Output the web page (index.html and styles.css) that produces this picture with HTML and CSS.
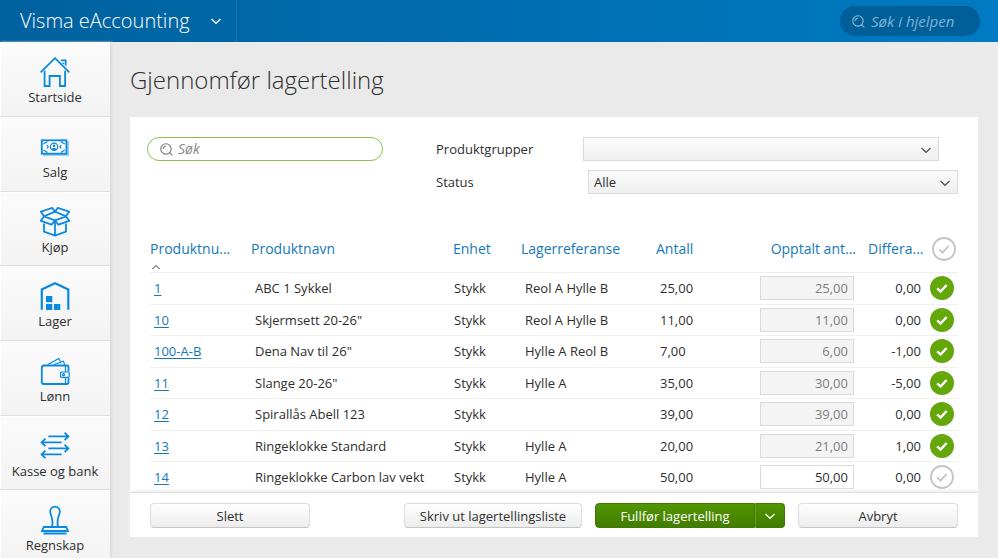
FILE: index.html
```html
<!DOCTYPE html>
<html lang="nb">
<head>
<meta charset="utf-8">
<meta name="viewport" content="width=device-width, initial-scale=1">
<title>Gjennomfør lagertelling</title>
<link rel="stylesheet" href="styles.css">
</head>
<body>
<svg class="defs" aria-hidden="true">
  <symbol id="chevron" viewBox="0 0 12 12"><path d="M1.500 4L6 8.300 10.500 4"/></symbol>
  <symbol id="search" viewBox="0 0 12 12"><circle cx="5.5" cy="5.5" r="4.8"/><path d="M8.800 8.800l2.600 2.600M3 5.600a2.500 2.500 0 0 1 2.400-2.600"/></symbol>
  <symbol id="check" viewBox="0 0 24 24"><circle cx="12" cy="12" r="11"/><path d="M7.200 12.400l3.400 3.200 6-6.600"/></symbol>
</svg>
<header class="topbar">
  <button class="brand" type="button">Visma eAccounting <svg class="chevron"><use href="#chevron"/></svg></button>
  <div class="help">
    <svg class="glass"><use href="#search"/></svg>
    <input class="help-input" type="search" placeholder="Søk i hjelpen" aria-label="Søk i hjelpen">
  </div>
</header>
<div class="layout">
  <nav class="sidebar">
    <a class="nav-item" href="#">
      <svg class="nav-icon" viewBox="0 0 30 30"><path d="M.6 15.400L15 1.200l14.400 14.200M21 3.400h4.700v5.200M23.300 5.800v1.200M4.600 13.800V29h5V19h10.300v10h5.200V13.800"/></svg>
      <span>Startside</span></a>
    <a class="nav-item" href="#">
      <svg class="nav-icon" viewBox="0 0 30 30"><path class="pale" d="M28 9v14H3"/><rect x="1.800" y="8.300" width="24.600" height="13.400"/><circle class="thin" cx="14.100" cy="14.800" r="3.700"/><circle class="solid" cx="14.100" cy="13.800" r="1.300"/><path class="solid" d="M11.600 17.200c.5-1.600 4.500-1.600 5 0-1.200 1.500-3.800 1.500-5 0z"/><path class="thin" d="M3.500 12l4-2.500M3.500 18l4 2.500M24.700 12l-4-2.500M24.700 18l-4 2.500M7 13.200l1.200 1.600L7 16.400M21.200 13.200L20 14.800l1.200 1.600"/></svg>
      <span>Salg</span></a>
    <a class="nav-item" href="#">
      <svg class="nav-icon" viewBox="0 0 30 30"><path d="M4 9.300L15 13.300 11.600 17.700.8 13.800zM26 9.300L15 13.300l3.400 4.400 10.800-3.900zM4 9.300L.8 4.600 12.200.9 15 4.700zM26 9.300l3.200-4.700L17.800.9 15 4.700zM4 16.500v8.200l11 3.800 11-3.800v-8.200M15 13.300v15"/></svg>
      <span>Kjøp</span></a>
    <a class="nav-item" href="#">
      <svg class="nav-icon" viewBox="0 0 30 30"><path class="bold" d="M1.800 28.800V8.400L15 2.200l13.300 6.200v20.400"/><path class="solid" d="M6 15h6.300v6.300H6zM6 23h6.300v6H6zM14 23h6.300v6H14z"/></svg>
      <span>Lager</span></a>
    <a class="nav-item" href="#">
      <svg class="nav-icon" viewBox="0 0 30 30"><path d="M28.500 15.500V11q0-1.500-1.500-1.500H4Q1.800 9.500 1.800 12v14q0 2 2 2h23q1.700 0 1.700-1.700V22"/><path class="thin" d="M7.500 8.800l11.200-6.200 2 3.200M13.500 8.800l10-3.600 1.200 4M25.500 9.500V16M25.500 21.500V28"/><rect class="thin" x="20.500" y="16" width="8.800" height="5.300" rx="1"/><circle class="thin" cx="23.500" cy="18.700" r="1"/></svg>
      <span>Lønn</span></a>
    <a class="nav-item" href="#">
      <svg class="nav-icon" viewBox="0 0 30 30"><path d="M8.300 5.400h20M24.600 1.700l3.800 3.700-3.800 3.700M21.700 11.400h-20M5.400 7.700L1.600 11.400l3.800 3.700M8.300 17.400h20M24.600 13.700l3.800 3.700-3.800 3.700M21.700 23.400h-20M5.400 19.700l-3.800 3.700 3.800 3.700"/></svg>
      <span>Kasse og bank</span></a>
    <a class="nav-item" href="#">
      <svg class="nav-icon" viewBox="0 0 30 30"><path d="M12 21.500c1.200-5 .3-8-1-11.500C8.800 4.800 11.500 1.700 15 1.700S21.200 4.800 19 10c-1.300 3.500-2.200 6.500-1 11.500M3.800 22h22.400l1.800 4H2zM3.500 28.500h23"/></svg>
      <span>Regnskap</span></a>
  </nav>
  <main class="main">
    <h1 class="title">Gjennomfør lagertelling</h1>
    <section class="panel">
      <form class="filters">
        <div class="search">
          <svg class="glass"><use href="#search"/></svg>
          <input class="search-input" type="search" placeholder="Søk" aria-label="Søk">
        </div>
        <div class="fields">
          <div class="field">
            <label class="field-label" for="groups">Produktgrupper</label>
            <div class="select select-groups"><select id="groups"><option></option></select><svg class="chevron"><use href="#chevron"/></svg></div>
          </div>
          <div class="field">
            <label class="field-label" for="status">Status</label>
            <div class="select select-status"><select id="status"><option>Alle</option></select><svg class="chevron"><use href="#chevron"/></svg></div>
          </div>
        </div>
      </form>
      <table class="stock">
        <colgroup><col class="c-number"><col><col class="c-unit"><col class="c-ref"><col class="c-qty"><col class="c-count"><col class="c-diff"><col class="c-check"></colgroup>
        <thead>
          <tr>
            <th>Produktnu...<svg class="sort" viewBox="0 0 10 6"><path d="M1.500 5L5 1.500 8.500 5"/></svg></th>
            <th>Produktnavn</th><th>Enhet</th><th>Lagerreferanse</th><th>Antall</th>
            <th class="head-count">Opptalt ant...</th>
            <th class="head-diff">Differa...</th>
            <th class="mark"><button class="check" type="button" aria-label="Velg alle"><svg><use href="#check"/></svg></button></th>
          </tr>
        </thead>
        <tbody>
          <tr><td><a href="#">1</a></td><td>ABC 1 Sykkel</td><td class="unit">Stykk</td><td>Reol A Hylle B</td><td>25,00</td><td class="entry"><input class="count" value="25,00" aria-label="Opptalt antall 1" disabled></td><td class="num">0,00</td><td class="mark"><button class="check done" type="button" aria-label="Talt 1"><svg><use href="#check"/></svg></button></td></tr>
          <tr><td><a href="#">10</a></td><td>Skjermsett 20-26"</td><td class="unit">Stykk</td><td>Reol A Hylle B</td><td>11,00</td><td class="entry"><input class="count" value="11,00" aria-label="Opptalt antall 10" disabled></td><td class="num">0,00</td><td class="mark"><button class="check done" type="button" aria-label="Talt 10"><svg><use href="#check"/></svg></button></td></tr>
          <tr><td><a href="#">100-A-B</a></td><td>Dena Nav til 26"</td><td class="unit">Stykk</td><td>Hylle A Reol B</td><td>7,00</td><td class="entry"><input class="count" value="6,00" aria-label="Opptalt antall 100-A-B" disabled></td><td class="num">-1,00</td><td class="mark"><button class="check done" type="button" aria-label="Talt 100-A-B"><svg><use href="#check"/></svg></button></td></tr>
          <tr><td><a href="#">11</a></td><td>Slange 20-26"</td><td class="unit">Stykk</td><td>Hylle A</td><td>35,00</td><td class="entry"><input class="count" value="30,00" aria-label="Opptalt antall 11" disabled></td><td class="num">-5,00</td><td class="mark"><button class="check done" type="button" aria-label="Talt 11"><svg><use href="#check"/></svg></button></td></tr>
          <tr><td><a href="#">12</a></td><td>Spirallås Abell 123</td><td class="unit">Stykk</td><td></td><td>39,00</td><td class="entry"><input class="count" value="39,00" aria-label="Opptalt antall 12" disabled></td><td class="num">0,00</td><td class="mark"><button class="check done" type="button" aria-label="Talt 12"><svg><use href="#check"/></svg></button></td></tr>
          <tr><td><a href="#">13</a></td><td>Ringeklokke Standard</td><td class="unit">Stykk</td><td>Hylle A</td><td>20,00</td><td class="entry"><input class="count" value="21,00" aria-label="Opptalt antall 13" disabled></td><td class="num">1,00</td><td class="mark"><button class="check done" type="button" aria-label="Talt 13"><svg><use href="#check"/></svg></button></td></tr>
          <tr><td><a href="#">14</a></td><td>Ringeklokke Carbon lav vekt</td><td class="unit">Stykk</td><td>Hylle A</td><td>50,00</td><td class="entry"><input class="count" value="50,00" aria-label="Opptalt antall 14"></td><td class="num">0,00</td><td class="mark"><button class="check" type="button" aria-label="Talt 14"><svg><use href="#check"/></svg></button></td></tr>
        </tbody>
      </table>
      <footer class="actions">
        <button class="btn btn-side" type="button">Slett</button>
        <div class="actions-right">
          <button class="btn btn-print" type="button">Skriv ut lagertellingsliste</button>
          <div class="split">
            <button class="split-main" type="button">Fullfør lagertelling</button>
            <button class="split-more" type="button" aria-label="Flere valg"><svg class="chevron"><use href="#chevron"/></svg></button>
          </div>
          <button class="btn btn-side" type="button">Avbryt</button>
        </div>
      </footer>
    </section>
  </main>
</div>
</body>
</html>
```
FILE: styles.css
```css
* { box-sizing: border-box; }

body {
  margin: 0;
  height: 100vh;
  display: flex;
  flex-direction: column;
  overflow: hidden;
  background: #eaeaea;
  color: #2e2e2e;
  font: 13px/20px "Open Sans", sans-serif;
}

button, input, select { font: inherit; color: inherit; margin: 0; }
button { cursor: pointer; }
svg { fill: none; stroke: currentColor; display: block; flex: none; }
.defs { position: absolute; width: 0; height: 0; }
.chevron { width: 12px; height: 12px; stroke-width: 1.2; }
.glass { width: 13px; height: 13px; }

/* Top bar */
.topbar {
  flex: none;
  height: 42px;
  display: flex;
  align-items: center;
  justify-content: space-between;
  padding-right: 18px;
  color: #fff;
  background: linear-gradient(90deg, #00629e, #007ac2);
}
.brand {
  height: 100%;
  width: 237px;
  display: flex;
  align-items: center;
  justify-content: space-between;
  padding: 0 14px 0 20px;
  border: 0;
  border-right: 1px solid #1a72ab;
  background: none;
  font-size: 20px;
  font-weight: 300;
  white-space: nowrap;
}
.help {
  width: 140px;
  height: 30px;
  display: flex;
  align-items: center;
  gap: 6px;
  padding: 0 12px;
  border-radius: 15px;
  background: #005f99;
  color: #93bddb;
}
.help-input, .search-input {
  appearance: none;
  min-width: 0;
  flex: 1;
  padding: 0;
  border: 0;
  outline: 0;
  background: none;
  font-size: 14px;
  font-style: italic;
}
.help-input { font-size: 15px; }
.help-input::placeholder { color: #7fb2d6; }

/* Sidebar */
.layout { flex: 1; min-height: 0; display: flex; }
.sidebar {
  flex: none;
  width: 111px;
  overflow: hidden;
  border-right: 1px solid #dcdcdc;
  box-shadow: 1px 0 2px #dcdcdc;
}
.nav-item {
  height: 75px;
  display: flex;
  flex-direction: column;
  align-items: center;
  padding-top: 15px;
  background: linear-gradient(#fbfbfb, #f3f3f3);
  border-bottom: 1px solid #dedede;
  box-shadow: inset 1px 1px #fff;
  color: inherit;
  text-decoration: none;
}
.nav-item:nth-child(3n) { height: 74px; }
.nav-icon { width: 30px; height: 30px; color: #0a8ade; stroke-width: 1.8; }
.nav-icon .thin { stroke-width: 1.2; }
.nav-icon .bold { stroke-width: 2.2; }
.nav-icon .pale { stroke: #7fc1ee; stroke-width: 1.6; }
.nav-icon .solid { fill: currentColor; stroke: none; }

/* Page */
.main { flex: 1; min-width: 0; padding: 20px 20px 20px 19px; overflow: hidden; }
.title { margin: 0 0 19px; font-size: 24px; line-height: 36px; font-weight: 300; }
.panel { background: #fff; }

.filters {
  display: flex;
  justify-content: space-between;
  padding: 20px 20px 31px 17px;
}
.search {
  width: 236px;
  height: 24px;
  display: flex;
  align-items: center;
  gap: 5px;
  padding: 0 12px;
  border: 1px solid #8cc152;
  border-radius: 12px;
  color: #777;
}
.search-input::placeholder { color: #8a8a8a; }
.fields { width: 522px; display: grid; gap: 9px; }
.field { display: flex; justify-content: space-between; align-items: center; }
.select { position: relative; }
.select-groups { width: 356px; margin-right: 19px; }
.select-status { width: 370px; }
.select select {
  appearance: none;
  display: block;
  width: 100%;
  height: 24px;
  padding: 0 24px 0 5px;
  border: 1px solid #dadada;
  border-radius: 0;
  background: linear-gradient(#fafafa, #f0f0f0);
  line-height: 20px;
}
.select .chevron { position: absolute; right: 7px; top: 7px; pointer-events: none; color: #555; }

/* Table */
.stock {
  width: calc(100% - 40px);
  margin: 0 20px;
  border-collapse: separate;
  border-spacing: 0;
  table-layout: fixed;
}
.c-number { width: 101px; }
.c-unit { width: 68px; }
.c-ref { width: 135px; }
.c-qty { width: 104px; }
.c-count { width: 104px; }
.c-diff { width: 59px; }
.c-check { width: 35px; }
.stock th {
  height: 48px;
  padding: 14px 0 0;
  vertical-align: top;
  text-align: left;
  font-size: 14px;
  font-weight: 400;
  line-height: 20px;
  white-space: nowrap;
  color: #1678b8;
  border-bottom: 1px solid #ededed;
}
.stock td {
  height: 31px;
  padding: 0 0 1px 4px;
  white-space: nowrap;
  border-bottom: 1px solid #f0f0f0;
}
.stock tr:nth-child(odd) td { height: 32px; }
.stock tr:last-child td { height: 30px; border-bottom: 0; }
.stock td a { color: #1678b8; text-underline-offset: 2px; }
.stock td.unit { padding-left: 1px; }
.stock td.num { text-align: right; padding-right: 2px; }
.stock th.head-count { text-align: right; padding-right: 8px; }
.stock th.head-diff { padding-left: 4px; }
.stock td.mark { padding: 0 4px 1px 0; }
.stock th.mark { padding: 12px 2px 0 0; }
.stock td.entry { padding: 0 0 1px; }
.sort { width: 10px; height: 6px; margin: 5px 0 0 1px; color: #333; }
.count {
  display: block;
  width: 94px;
  height: 24px;
  padding: 0 5px;
  border: 1px solid #dadada;
  background: #fff;
  text-align: right;
}
.count:disabled { background: #f4f4f4; color: #7d7d7d; }
.check {
  display: block;
  width: 24px;
  height: 24px;
  margin-left: auto;
  padding: 0;
  border: 0;
  border-radius: 12px;
  background: none;
  color: #c4c4c4;
}
.check svg { width: 24px; height: 24px; stroke-width: 1.8; }
.check.done { background: #64a70b; }
.check.done svg { color: #fff; stroke-width: 2.4; clip-path: circle(9px); }

/* Footer */
.actions {
  display: flex;
  justify-content: space-between;
  padding: 10px 20px 9px;
  border-top: 1px solid #e0e0e0;
  box-shadow: 0 -2px 3px #f0f0f0;
}
.actions-right { display: flex; gap: 13px; }
.btn {
  height: 25px;
  padding: 0;
  border: 1px solid #dedede;
  border-bottom-color: #c4c4c4;
  border-radius: 4px;
  background: linear-gradient(#fff, #ececec);
}
.btn-side { width: 160px; }
.btn-print { width: 178px; }
.split { display: flex; width: 190px; }
.split button {
  display: flex;
  align-items: center;
  justify-content: center;
  height: 25px;
  padding: 0;
  border: 1px solid #3f7a00;
  background: linear-gradient(#529600, #427c00);
  color: #fff;
}
.split .split-main { flex: 1; border-radius: 4px 0 0 4px; }
.split .split-more { width: 30px; border-left: 1px solid #67a020; border-radius: 0 4px 4px 0; }
```
